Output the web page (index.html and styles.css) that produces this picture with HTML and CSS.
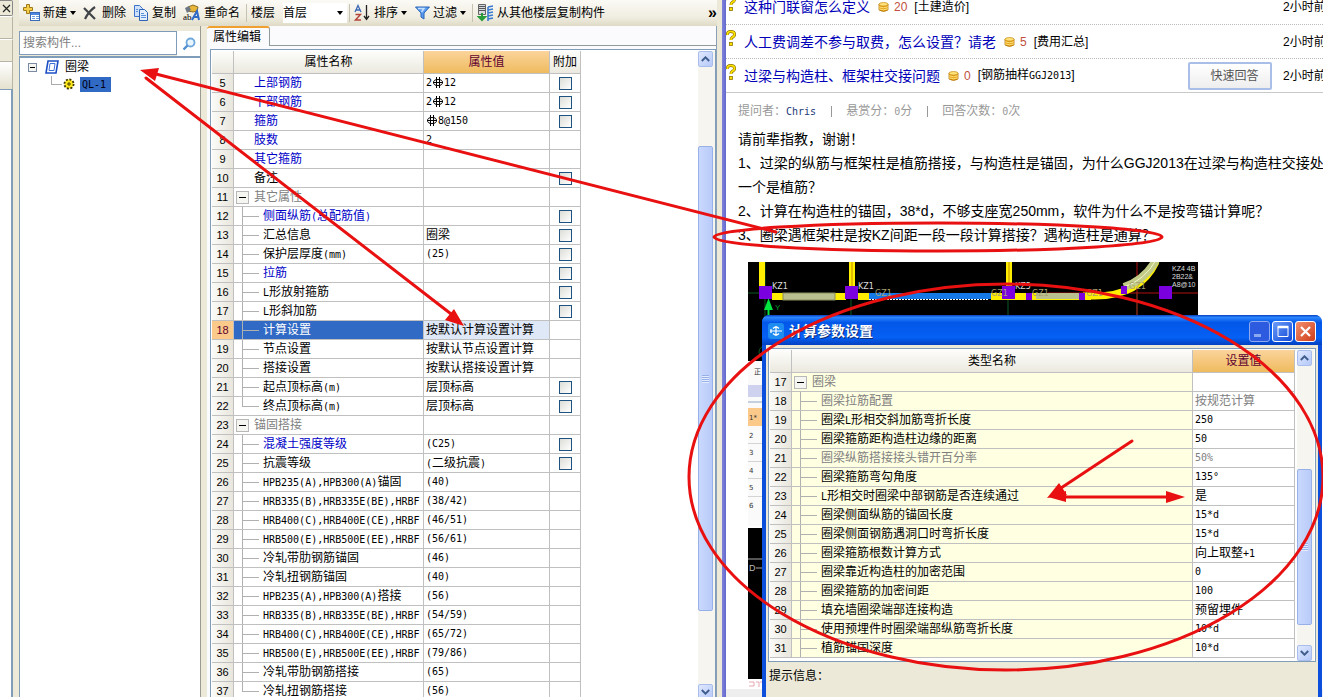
FILE: index.html
```html
<!DOCTYPE html>
<html lang="zh-CN">
<head>
<meta charset="utf-8">
<title>属性编辑</title>
<link rel="stylesheet" href="styles.css">
</head>
<body>
<svg class="defs" width="0" height="0" aria-hidden="true">
  <symbol id="rebar" viewBox="0 0 12 11"><ellipse cx="6" cy="5.500" rx="4.500" ry="3" fill="none" stroke="#000"/><path d="M4.500 0v11M7.500 0v11M1 5.500h10" stroke="#000"/></symbol>
  <symbol id="quest" viewBox="0 0 10 16"><path d="M1.500 5Q1 1.500 4.800 1.500T8.500 4.500Q8.500 6.500 6 7.500 5 8 5 10" fill="none" stroke="#8d7300" stroke-width="3"/><path d="M1.500 5Q1 1.500 4.800 1.500T8.500 4.500Q8.500 6.500 6 7.500 5 8 5 10" fill="none" stroke="#ffe400" stroke-width="1.700"/><rect x="3.500" y="12.500" width="3" height="3" fill="#ffe400" stroke="#8d7300" stroke-width=".8"/></symbol>
  <symbol id="coin" viewBox="0 0 11 10"><path d="M1 2v6q4.500 3 9 0V2z" fill="#e6a21c" stroke="#b3720a" stroke-width=".8"/><ellipse cx="5.500" cy="2.300" rx="4.500" ry="1.800" fill="#ffe27a" stroke="#c98a12" stroke-width=".7"/><path d="M1 4.800q4.500 2 9 0M1 6.800q4.500 2 9 0" fill="none" stroke="#ffe27a"/></symbol>
</svg>
<aside class="dock">
  <button class="dock-close" aria-label="关闭"><svg width="9" height="9" viewBox="0 0 9 9"><path d="M1 1L8 8M8 1L1 8" stroke="#222" stroke-width="1.2"/></svg></button>
  <div class="dock-bar"></div>
  <div class="dock-bar"></div>
  <div class="dock-head"></div>
  <div class="dock-body"></div>
</aside>

<main class="app">
  <div class="toolbar">
    <button class="tool"><svg width="17" height="18" viewBox="0 0 17 18"><path d="M3.500.500h3v3h3v3h-3v3h-3v-3h-3v-3h3z" fill="#f5cf4a" stroke="#a07a18"/><rect x="7.500" y="8.500" width="9" height="8" fill="#fff" stroke="#3a6ab8"/><path d="M8 10h8" stroke="#4c86dc" stroke-width="2"/><path d="M9 12.500h3M13 12.500h3M9 14.500h3M13 14.500h3" stroke="#6d9be0"/></svg>新建<i class="caret"></i></button>
    <button class="tool"><svg class="ico-del" width="14" height="14" viewBox="0 0 14 14"><path d="M1 2L12 13M12 1Q6 5 2 13" fill="none" stroke="#404448" stroke-width="2.200"/></svg>删除</button>
    <button class="tool"><svg width="16" height="16" viewBox="0 0 16 16"><path d="M1.500.500h5l3 3v8h-8z" fill="#cfe2fb" stroke="#3d74c9"/><path d="M6.500 4.500h5l3 3v8h-8z" fill="#e4effe" stroke="#2e62b5"/><path d="M8 8.500h3M8 10.500h5M8 12.500h5M3 4.500h2M3 6.500h2" stroke="#5b8fdc"/></svg>复制</button>
    <button class="tool"><svg width="18" height="18" viewBox="0 0 18 18"><path d="M5 3l5-2 5 2-1 4-4 1-5-1z" fill="#e8b73a" stroke="#8b6a20"/><path d="M2 4l4-2 2 4-4 3z" fill="#6e7884"/><text x="0" y="16" class="ico-ab">ab</text><path d="M9 16l5-9 2 9M11 13h5" fill="none" stroke="#2f6bc6" stroke-width="2"/></svg>重命名</button>
    <span class="sep"></span>
    <label for="floor">楼层</label>
    <span class="floor"><select id="floor"><option>首层</option></select><i class="caret"></i></span>
    <span class="sep"></span>
    <button class="tool tool-sort"><svg width="17" height="18" viewBox="0 0 17 18"><path d="M1 8L4 1.500 7 8M2 6h4" fill="none" stroke="#3c68b8" stroke-width="1.300"/><path d="M1.500 10.500h5l-5 5.500h5.500" fill="none" stroke="#b5433a" stroke-width="1.400"/><path d="M12.500 1v14M10 12l2.500 3.500L15 12" fill="none" stroke="#222" stroke-width="1.300"/></svg>排序<i class="caret"></i></button>
    <button class="tool"><svg width="15" height="14" viewBox="0 0 15 14"><path d="M.500 1h14L9 7v6l-3-2V7z" fill="#5b9df0" stroke="#2963b8"/><path d="M3 2.500h6L6.500 6" fill="none" stroke="#c7e0ff" stroke-width="1.500"/></svg>过滤<i class="caret"></i></button>
    <span class="sep"></span>
    <button class="tool"><svg width="17" height="18" viewBox="0 0 17 18"><path d="M1.500.500h7v10h-7z" fill="#d6d9de" stroke="#666"/><path d="M2 2.500h6M2 4.500h6M2 6.500h6" stroke="#555"/><path d="M5 9v6M2 13l3 3 3-3z" fill="#2b9c3a" stroke="#2b9c3a" stroke-width="2"/><path d="M11 3l5-1M11 6l5-1M11 9l5-1M11 12l5-1M11 15l5-1M11 3v14" stroke="#3a7bd0" stroke-width="1.600"/></svg>从其他楼层复制构件</button>
    <button class="more" aria-label="更多">»</button>
  </div>

  <div class="work">
    <section class="side">
      <div class="search">
        <input type="text" placeholder="搜索构件..." aria-label="搜索构件">
        <button aria-label="搜索"><svg width="14" height="14" viewBox="0 0 14 14"><circle cx="8.500" cy="5.500" r="4" fill="#eaf6ff" stroke="#6fa8dc" stroke-width="1.800"/><path d="M5.500 8.500L1.500 12.500" stroke="#4f8fd0" stroke-width="2.400"/></svg></button>
      </div>
      <div class="tree">
        <div class="node">
          <svg width="9" height="9" viewBox="0 0 9 9"><rect x=".5" y=".5" width="8" height="8" fill="#f4f4f0" stroke="#7b8ba3"/><path d="M2 4.500h5" stroke="#000"/></svg>
          <svg width="14" height="14" viewBox="0 0 14 14"><path d="M3 1h10l-2 12H1z" fill="#fff" stroke="#1d4fc4" stroke-width="1.600"/><path d="M5 3.500h5l-1 7H4z" fill="#fff" stroke="#3e70dd"/></svg>
          <span>圈梁</span>
        </div>
        <div class="node leaf">
          <svg width="12" height="12" viewBox="0 0 12 12"><circle cx="6" cy="6" r="4.500" fill="#ffe81a" stroke="#3d3700" stroke-width="2" stroke-dasharray="2 1.500"/><circle cx="6" cy="6" r="3.500" fill="#ffe81a"/><path d="M4 6h4M6 4v4" stroke="#4a4300"/></svg>
          <span class="m picked">QL-1</span>
        </div>
      </div>
    </section>

    <section class="props">
      <div class="tabs"><button class="tab">属性编辑</button></div>
      <div class="frame frame-main">
        <table class="grid">
          <colgroup><col class="c-no"><col class="c-name"><col class="c-val"><col class="c-add"></colgroup>
          <thead><tr><th></th><th>属性名称</th><th class="hot">属性值</th><th>附加</th></tr></thead>
          <tbody>
          <tr><th>5</th><td class="top blue">上部钢筋</td><td class="m">2<svg class="rebar" width="12" height="11"><use href="#rebar"/></svg>12</td><td><input type="checkbox" aria-label="附加 5"></td></tr>
          <tr><th>6</th><td class="top blue">下部钢筋</td><td class="m">2<svg class="rebar" width="12" height="11"><use href="#rebar"/></svg>12</td><td><input type="checkbox" aria-label="附加 6"></td></tr>
          <tr><th>7</th><td class="top blue">箍筋</td><td class="m"><svg class="rebar" width="12" height="11"><use href="#rebar"/></svg>8@150</td><td><input type="checkbox" aria-label="附加 7"></td></tr>
          <tr><th>8</th><td class="top blue">肢数</td><td class="m">2</td><td></td></tr>
          <tr><th>9</th><td class="top blue">其它箍筋</td><td></td><td></td></tr>
          <tr><th>10</th><td class="top">备注</td><td></td><td><input type="checkbox" aria-label="附加 10"></td></tr>
          <tr><th>11</th><td class="group"><button class="fold" aria-label="折叠"></button>其它属性</td><td></td><td></td></tr>
          <tr><th>12</th><td class="kid blue">侧面纵筋<span class="m">(</span>总配筋值<span class="m">)</span></td><td></td><td><input type="checkbox" aria-label="附加 12"></td></tr>
          <tr><th>13</th><td class="kid">汇总信息</td><td>圈梁</td><td><input type="checkbox" aria-label="附加 13"></td></tr>
          <tr><th>14</th><td class="kid">保护层厚度<span class="m">(mm)</span></td><td class="m">(25)</td><td><input type="checkbox" aria-label="附加 14"></td></tr>
          <tr><th>15</th><td class="kid blue">拉筋</td><td></td><td><input type="checkbox" aria-label="附加 15"></td></tr>
          <tr><th>16</th><td class="kid"><span class="m">L</span>形放射箍筋</td><td></td><td><input type="checkbox" aria-label="附加 16"></td></tr>
          <tr><th>17</th><td class="kid"><span class="m">L</span>形斜加筋</td><td></td><td><input type="checkbox" aria-label="附加 17"></td></tr>
          <tr class="selected"><th>18</th><td class="kid">计算设置</td><td>按默认计算设置计算</td><td></td></tr>
          <tr><th>19</th><td class="kid">节点设置</td><td>按默认节点设置计算</td><td></td></tr>
          <tr><th>20</th><td class="kid">搭接设置</td><td>按默认搭接设置计算</td><td></td></tr>
          <tr><th>21</th><td class="kid">起点顶标高<span class="m">(m)</span></td><td>层顶标高</td><td><input type="checkbox" aria-label="附加 21"></td></tr>
          <tr><th>22</th><td class="kid last">终点顶标高<span class="m">(m)</span></td><td>层顶标高</td><td><input type="checkbox" aria-label="附加 22"></td></tr>
          <tr><th>23</th><td class="group"><button class="fold" aria-label="折叠"></button>锚固搭接</td><td></td><td></td></tr>
          <tr><th>24</th><td class="kid blue">混凝土强度等级</td><td class="m">(C25)</td><td><input type="checkbox" aria-label="附加 24"></td></tr>
          <tr><th>25</th><td class="kid">抗震等级</td><td><span class="m">(</span>二级抗震<span class="m">)</span></td><td><input type="checkbox" aria-label="附加 25"></td></tr>
          <tr><th>26</th><td class="kid"><span class="m">HPB235(A),HPB300(A)</span>锚固</td><td class="m">(40)</td><td></td></tr>
          <tr><th>27</th><td class="kid"><span class="m">HRB335(B),HRB335E(BE),HRBF</span></td><td class="m">(38/42)</td><td></td></tr>
          <tr><th>28</th><td class="kid"><span class="m">HRB400(C),HRB400E(CE),HRBF</span></td><td class="m">(46/51)</td><td></td></tr>
          <tr><th>29</th><td class="kid"><span class="m">HRB500(E),HRB500E(EE),HRBF</span></td><td class="m">(56/61)</td><td></td></tr>
          <tr><th>30</th><td class="kid">冷轧带肋钢筋锚固</td><td class="m">(46)</td><td></td></tr>
          <tr><th>31</th><td class="kid">冷轧扭钢筋锚固</td><td class="m">(40)</td><td></td></tr>
          <tr><th>32</th><td class="kid"><span class="m">HPB235(A),HPB300(A)</span>搭接</td><td class="m">(56)</td><td></td></tr>
          <tr><th>33</th><td class="kid"><span class="m">HRB335(B),HRB335E(BE),HRBF</span></td><td class="m">(54/59)</td><td></td></tr>
          <tr><th>34</th><td class="kid"><span class="m">HRB400(C),HRB400E(CE),HRBF</span></td><td class="m">(65/72)</td><td></td></tr>
          <tr><th>35</th><td class="kid"><span class="m">HRB500(E),HRB500E(EE),HRBF</span></td><td class="m">(79/86)</td><td></td></tr>
          <tr><th>36</th><td class="kid">冷轧带肋钢筋搭接</td><td class="m">(65)</td><td></td></tr>
          <tr><th>37</th><td class="kid last">冷轧扭钢筋搭接</td><td class="m">(56)</td><td></td></tr>
          </tbody>
        </table>
        <div class="scroll scroll-main">
          <button class="sb up" aria-label="向上"><svg width="9" height="6" viewBox="0 0 9 6"><path d="M.800 5L4.500 1.300 8.200 5" fill="none" stroke="#3f5d8c" stroke-width="1.900"/></svg></button>
          <div class="rail"><div class="thumb"></div></div>
          <button class="sb" aria-label="向下"><svg width="9" height="6" viewBox="0 0 9 6"><path d="M.800 1L4.500 4.700 8.200 1" fill="none" stroke="#3f5d8c" stroke-width="1.900"/></svg></button>
        </div>
      </div>
    </section>
  </div>
</main>
<div class="edge"></div>

<section class="web">
  <ul class="asks">
    <li><svg class="quest" width="10" height="16"><use href="#quest"/></svg><a href="#">这种门联窗怎么定义</a><svg width="11" height="10"><use href="#coin"/></svg><b>20</b><span>[土建造价]</span><time>2小时前</time></li>
    <li><svg class="quest" width="10" height="16"><use href="#quest"/></svg><a href="#">人工费调差不参与取费，怎么设置？请老</a><svg width="11" height="10"><use href="#coin"/></svg><b>5</b><span>[费用汇总]</span><time>2小时前</time></li>
    <li><svg class="quest" width="10" height="16"><use href="#quest"/></svg><a href="#">过梁与构造柱、框架柱交接问题</a><svg width="11" height="10"><use href="#coin"/></svg><b>0</b><span>[钢筋抽样<span class="m">GGJ2013</span>]</span><button class="reply">快速回答</button><time class="near">2小时前</time></li>
  </ul>
  <p class="meta"><span>提问者：<a href="#">Chris</a></span><i></i><span>悬赏分：<span class="m">0</span>分</span><i></i><span>回答次数：<span class="m">0</span>次</span></p>
  <div class="post">
    请前辈指教，谢谢！<br>
    1、过梁的纵筋与框架柱是植筋搭接，与构造柱是锚固，为什么GGJ2013在过梁与构造柱交接处<br>
    一个是植筋？<br>
    2、计算在构造柱的锚固，38*d，不够支座宽250mm，软件为什么不是按弯锚计算呢？<br>
    3、圈梁遇框架柱是按KZ间距一段一段计算搭接？遇构造柱是通算？
  </div>
  <svg class="cad" width="450" height="427" viewBox="0 0 450 427">
    <rect width="450" height="99" fill="#000"/>
    <path d="M17 0v99M103 0v99M260 0v99M389 30v69M0 31h12" stroke="#0d5a22"/>
    <path d="M389 0v60M300 31h150" stroke="#b01010"/>
    <path d="M11 0h6v25h-6zM101 0h6v25h-6zM258 0h6v25h-6z" fill="#ffee00"/>
    <path d="M104 0v25M261 0v25" stroke="#c58b00"/>
    <rect x="24" y="31" width="74" height="7" fill="#ffee00"/>
    <rect x="35" y="31" width="52" height="7" fill="#b9bf8f" stroke="#8a8d5c"/>
    <rect x="110" y="31" width="11" height="7" fill="#ffee00"/>
    <rect x="121" y="31" width="122" height="6" fill="#1478e6"/>
    <path d="M121 37.500h120" stroke="#fff" stroke-dasharray="2 1"/>
    <rect x="243" y="31" width="100" height="7" fill="#ffee00"/>
    <rect x="288" y="31" width="43" height="6" fill="#b9bf8f"/>
    <path d="M335 34H347Q392 34 408 0" fill="none" stroke="#ffee00" stroke-width="7"/>
    <path d="M376 25Q397 18 408 -2" fill="none" stroke="#c3cc86" stroke-width="8"/>
    <path d="M376 25Q397 18 408 -2" fill="none" stroke="#f0f4cf"/>
    <path d="M11 24h13v13H11zM97 24h13v13H97zM254 24h13v13h-13zM411 24h13v13h-13zM278 31h6v7h-6zM331 31h6v7h-6zM373 24h6v8h-6z" fill="#7a00e0"/>
    <g class="cad-t"><text x="24" y="27">KZ1</text><text x="110" y="27">KZ1</text><text x="267" y="27">KZ5</text><text x="127" y="34" class="dim">GZ1</text><text x="243" y="34" class="dim">GZ1</text><text x="284" y="34" class="dim">GZ1</text><text x="338" y="34" class="dim">GZ1</text><text x="381" y="27" class="dim">GZ1</text></g>
    <g class="cad-s"><text x="424" y="9">KZ4 4B</text><text x="424" y="17">2B22&amp;</text><text x="424" y="25">A8@10</text></g>
    <path d="M20.500 60V42M17.500 47h6l-3-8z" stroke="#00e640" fill="#00e640" stroke-width="2"/>
    <text x="27" y="48" class="axis">Y</text>
    <circle cx="17" cy="90" r="6" fill="none" stroke="#0d5a22"/>
    <rect y="99" width="18" height="165" fill="#fafafa"/>
    <rect y="123" width="14" height="12" fill="#cfd2ee"/><path d="M0 140h18" stroke="#8fa7c4"/>
    <rect y="146" width="18" height="18" fill="#fbc98a"/>
    <path d="M0 181.500h18M0 199.500h18M0 216.500h18M0 234.500h18" stroke="#d4d4d4"/>
    <g class="cad-n"><text x="6" y="112">正</text><text x="1" y="158">1*</text><text x="1" y="176">2</text><text x="1" y="193">3</text><text x="1" y="211">4</text><text x="1" y="228">5</text><text x="1" y="246">6</text></g>
    <rect y="266" width="18" height="151" fill="#000"/>
    <path d="M0 297h18M8 306h10" stroke="#aaa"/><text x="1" y="309" class="axis-d">D</text>
    <path d="M1 420h5v4H1M8 420h3v5M12 420h3v5" fill="none" stroke="#e5a8b0"/>
  </svg>
  <div class="web-foot"></div>
</section>

<section class="dialog" role="dialog" aria-label="计算参数设置">
  <header>
    <svg width="16" height="16" viewBox="0 0 16 16"><rect width="16" height="16" rx="3" fill="#1d8bf0"/><path d="M2 8h12M8 3v10M5 5.500q3-3 6 0M5 10.500q3 3 6 0M3 6v4" fill="none" stroke="#fff" stroke-width="1.200"/></svg>
    <h2>计算参数设置</h2>
    <button class="win dimmed" aria-label="最小化"><svg width="19" height="19" viewBox="0 0 19 19"><rect x="4" y="12" width="7" height="3" fill="#8aa9f0"/></svg></button>
    <button class="win" aria-label="最大化"><svg width="19" height="19" viewBox="0 0 19 19"><path d="M5 5.500h10v9H5z" fill="none" stroke="#fff"/><path d="M4.500 5h11" stroke="#fff" stroke-width="2.500"/></svg></button>
    <button class="win shut" aria-label="关闭"><svg width="19" height="19" viewBox="0 0 19 19"><path d="M5 5l9 9M14 5l-9 9" stroke="#fff" stroke-width="2.200"/></svg></button>
  </header>
  <div class="dialog-body">
    <div class="frame params">
      <table class="grid pale">
        <colgroup><col class="d-no"><col><col class="d-val"></colgroup>
        <thead><tr><th></th><th>类型名称</th><th class="hot">设置值</th></tr></thead>
        <tbody>
        <tr><th>17</th><td class="group"><button class="fold" aria-label="折叠"></button>圈梁</td><td></td></tr>
        <tr class="off"><th>18</th><td class="kid">圈梁拉筋配置</td><td>按规范计算</td></tr>
        <tr><th>19</th><td class="kid">圈梁<span class="m">L</span>形相交斜加筋弯折长度</td><td class="m">250</td></tr>
        <tr><th>20</th><td class="kid">圈梁箍筋距构造柱边缘的距离</td><td class="m">50</td></tr>
        <tr class="off"><th>21</th><td class="kid">圈梁纵筋搭接接头错开百分率</td><td class="m">50%</td></tr>
        <tr><th>22</th><td class="kid">圈梁箍筋弯勾角度</td><td class="m">135°</td></tr>
        <tr><th>23</th><td class="kid"><span class="m">L</span>形相交时圈梁中部钢筋是否连续通过</td><td>是</td></tr>
        <tr><th>24</th><td class="kid">圈梁侧面纵筋的锚固长度</td><td class="m">15*d</td></tr>
        <tr><th>25</th><td class="kid">圈梁侧面钢筋遇洞口时弯折长度</td><td class="m">15*d</td></tr>
        <tr><th>26</th><td class="kid">圈梁箍筋根数计算方式</td><td>向上取整<span class="m">+1</span></td></tr>
        <tr><th>27</th><td class="kid">圈梁靠近构造柱的加密范围</td><td class="m">0</td></tr>
        <tr><th>28</th><td class="kid">圈梁箍筋的加密间距</td><td class="m">100</td></tr>
        <tr><th>29</th><td class="kid">填充墙圈梁端部连接构造</td><td>预留埋件</td></tr>
        <tr><th>30</th><td class="kid">使用预埋件时圈梁端部纵筋弯折长度</td><td class="m">10*d</td></tr>
        <tr><th>31</th><td class="kid">植筋锚固深度</td><td class="m">10*d</td></tr>
        </tbody>
      </table>
      <div class="scroll scroll-dialog">
        <button class="sb up" aria-label="向上"><svg width="9" height="6" viewBox="0 0 9 6"><path d="M.800 5L4.500 1.300 8.200 5" fill="none" stroke="#3f5d8c" stroke-width="1.900"/></svg></button>
        <div class="rail"><div class="thumb"></div></div>
        <button class="sb" aria-label="向下"><svg width="9" height="6" viewBox="0 0 9 6"><path d="M.800 1L4.500 4.700 8.200 1" fill="none" stroke="#3f5d8c" stroke-width="1.900"/></svg></button>
      </div>
    </div>
    <p class="hint">提示信息：</p>
  </div>
</section>

<svg class="marks" width="1323" height="697" viewBox="0 0 1323 697" aria-hidden="true">
  <g fill="none" stroke="#e81010" stroke-width="3">
    <path d="M776 232L152 73M146 78L455 317M1132 441L1058 490M1060 497H1172" stroke-linecap="round"/>
    <ellipse cx="938" cy="237" rx="224" ry="14"/>
    <ellipse cx="1006" cy="477" rx="317" ry="193"/>
  </g>
  <path d="M140 70L159 68 155 81zM464 326L445 320 454 309zM1047 498L1059 483 1067 495zM1048 497L1066 491V502zM1185 497L1166 491V503z" fill="#e81010"/>
</svg>
</body>
</html>
```
FILE: styles.css
```css
* { box-sizing: border-box; }

body {
  margin: 0;
  height: 100vh;
  overflow: hidden;
  display: flex;
  background: #ece9d8;
  color: #000;
  font: 12px/18px "Liberation Sans", "Noto Sans CJK SC", sans-serif;
}

button, input, select { font: inherit; color: inherit; }
button { padding: 0; border: 0; background: none; }
h2, p, ul { margin: 0; padding: 0; }
svg { flex: none; display: block; }

.m { font-family: "DejaVu Sans Mono", "Noto Sans CJK SC", monospace; font-size: 10px; }

/* left dock */
.dock { flex: 0 0 13px; display: flex; flex-direction: column; margin-right: 6px; }
.dock-close { height: 16px; border: 1px solid #888; border-left: 0; border-radius: 0 2px 2px 0; display: grid; place-items: center; }
.dock-bar { height: 23px; border: 1px solid #b8b5a4; border-left: 0; border-top-color: #fff; }
.dock-head { height: 27px; background: linear-gradient(#fff, #e4e1cf); border-right: 1px solid #b8b5a4; }
.dock-body { flex: 1; background: #fff; border-top: 1px solid #7f9db9; border-right: 2px solid #7f9db9; }

/* application */
.app { flex: 0 0 698px; display: flex; flex-direction: column; min-width: 0; }
.toolbar { height: 26px; display: flex; align-items: center; padding-left: 4px; background: linear-gradient(#fbfaf5, #efecdf 70%, #dedac6); white-space: nowrap; }
.tool { display: flex; align-items: center; gap: 3px; margin-right: 7px; }
.tool-sort { margin-right: 8px; }
.ico-del { margin-right: 2px; }
.ico-ab { font: 9px "Liberation Serif", serif; }
.caret { border: 3px solid transparent; border-top: 4px solid #000; border-bottom: 0; }
.sep { width: 1px; height: 18px; background: #c5c2b2; margin-right: 4px; }
.tool + .sep { margin-left: -1px; }
.floor { display: flex; align-items: center; width: 64px; height: 20px; margin: 0 2px 0 8px; background: #fff; padding-right: 4px; }
.floor select { flex: 1; appearance: none; border: 0; background: none; padding: 0; height: 20px; }
.more { margin-left: auto; font-size: 16px; font-weight: bold; line-height: 12px; }

.work { flex: 1; display: flex; min-height: 0; }
.side { flex: 0 0 182px; display: flex; flex-direction: column; margin-right: 6px; border-right: 1px solid #9a9a90; }
.search { display: flex; height: 30px; padding-top: 5px; }
.search input { width: 158px; height: 24px; border: 1px solid #7f9db9; background: #fff; padding: 0 3px; font-size: 12px; }
.search input::placeholder { color: #808080; }
.search button { flex: 1; display: grid; place-items: center; background: #fff; }
.tree { flex: 1; background: #fff; border: 1px solid #7f9db9; border-width: 2px 0 0 1px; padding-left: 8px; }
.node { display: flex; align-items: center; height: 16px; margin-top: 1px; gap: 6px; }
.node svg + svg { margin-left: 2px; }
.leaf { margin-left: 23px; padding-left: 12px; gap: 5px; background: linear-gradient(#aaa, #aaa) 0 8px / 11px 1px no-repeat, linear-gradient(#aaa, #aaa) 0 0 / 1px 8px no-repeat; }
.picked { background: #316ac5; color: #001; width: 31px; height: 15px; line-height: 15px; padding-left: 2px; }

.props { flex: 1; min-width: 0; display: flex; flex-direction: column; background: #fbfbfe; border-right: 1px solid #8aa0b8; }
.tabs { height: 20px; border-bottom: 1px solid #919b9c; margin-bottom: 3px; }
.tab { height: 20px; padding: 0 8px 0 6px; background: #fbfbfe; border: 1px solid #919b9c; border-width: 0 1px 0 0; border-top: 2px solid #f0a030; border-radius: 3px 3px 0 0; font-size: 12px; line-height: 18px; }
.frame { flex: 1; min-height: 0; display: flex; overflow: hidden; background: #fff; border: 1px solid #7f9db9; padding: 1px 1px 0 1px; }
.frame-main { margin: 0 0 -4px 3px; padding-right: 0; }

/* grids */
.grid { table-layout: fixed; width: 369px; align-self: flex-start; border-spacing: 0; background: #fff; }
.c-no { width: 22px; } .c-name { width: 190px; } .c-val { width: 126px; } .c-add { width: 31px; }
.d-no { width: 22px; } .d-val { width: 102px; }
.grid th { font-weight: normal; padding: 0; background: linear-gradient(90deg, #fafaf8, #e8e6dc); border: 1px solid #c0c0c0; border-width: 0 1px 1px 0; }
.grid thead th { height: 23px; background: linear-gradient(#fdfdfb, #ebe9df); }
.grid thead .hot { background: linear-gradient(#fbd49c, #efbb5e); color: #600030; }
.grid tbody th { font: 11px/18px "Liberation Sans", sans-serif; }
.grid td { height: 19px; padding: 0 0 0 2px; line-height: 18px; white-space: nowrap; overflow: hidden; border: 1px solid #c0c0c0; border-width: 0 1px 1px 0; }
.grid td .m { line-height: 16px; }
.grid td.top { padding-left: 20px; }
.grid td.kid { padding-left: 29px; background-image: linear-gradient(#b0b0b0, #b0b0b0), linear-gradient(#b0b0b0, #b0b0b0); background-position: 8px 9px, 8px 0; background-size: 17px 1px, 1px 100%; background-repeat: no-repeat; }
.grid td.last { background-size: 17px 1px, 1px 9px; }
.grid .blue { color: #0000c8; }
.grid .group, .grid .off td { color: #808080; }
.fold { width: 13px; height: 13px; margin: 0 5px 0 0; vertical-align: -2px; border: 1px solid #b8b8b8; background: linear-gradient(#000, #000) center / 7px 1px no-repeat #f5f5f2; }
.selected td.kid { background-color: #316ac5; color: #fff; }
.selected td:nth-child(3) { background: #dfe8f6; }
.grid tbody .selected th { background: #fbc98a; color: #600030; }
.grid input { appearance: none; display: block; width: 13px; height: 13px; margin: 0 auto; border: 1px solid #1d5281; background: linear-gradient(135deg, #dcdcd7, #fff); }
.grid td:nth-child(4) { padding: 0; }
.rebar { display: inline-block; vertical-align: -2px; }
.pale { flex: 1; width: auto; }
.pale td.group, .pale td.kid { background-color: #ffffe1; }

/* scroll bars */
.scroll { flex: 0 0 17px; display: flex; flex-direction: column; margin-left: auto; background: #f6f5ef; padding-right: 2px; }
.sb { width: 15px; height: 16px; display: grid; place-items: center; background: linear-gradient(135deg, #dfe8fe, #b5c8f8); border: 1px solid #a9bdec; border-radius: 2px; }
.rail { flex: 1; display: flex; flex-direction: column; }
.thumb { flex: 1; background: repeating-linear-gradient(#98b0e8 0 1px, #e4ecff 1px 2px) center / 7px 8px no-repeat, linear-gradient(90deg, #c9d8fd, #b9cbf9); border: 1px solid #98b0e8; border-radius: 2px; }
.scroll-main .rail { padding: 79px 0 73px; }
.scroll-dialog .rail { padding: 103px 0 20px; }

.edge { flex: 0 0 9px; background: linear-gradient(90deg, #ece9d8 5px, #8084dc 5px, #6468cc); }

/* question page */
.web { flex: 1; min-width: 0; overflow: hidden; display: flex; flex-direction: column; background: #fff; }
.defs { position: absolute; }
.asks { list-style: none; font-size: 12px; }
.asks li { display: flex; align-items: center; height: 34px; border-bottom: 1px dotted #bbb; white-space: nowrap; }
.asks li:first-child { height: 25px; padding-bottom: 10px; }
.asks li:last-child { border-bottom: 1px solid #c8c8c8; }
.asks a { color: #0000b8; text-decoration: none; font-size: 14px; margin: 0 8px; }
.asks b { font-weight: normal; color: #c0503c; margin: 0 7px 0 5px; }
.asks .quest { margin-bottom: 8px; }
.asks time { flex: 0 0 40px; margin-left: auto; overflow: hidden; }
.asks .near { margin-left: 11px; }
.reply { width: 84px; height: 28px; margin-left: auto; padding-left: 9px; border: 2px solid #a9bfe8; border-radius: 2px; color: #555; background: linear-gradient(#fff, #eee); }
.meta { display: flex; align-items: center; color: #999; padding: 2px 0 0 12px; height: 34px; font-family: "Liberation Sans", "Noto Sans CJK TC", sans-serif; }
.meta a { color: #1c3a78; text-decoration: none; font: 10px "DejaVu Sans Mono", monospace; }
.meta i { width: 1px; height: 11px; background: #999; margin: 0 14px 0 15px; }
.post { font-size: 14px; line-height: 24px; padding: 0 0 0 12px; white-space: nowrap; }
.cad { margin: 15px 0 0 22px; }
.cad-t { font: 8px "DejaVu Sans", sans-serif; fill: #ddd; }
.cad-t .dim { fill: #a8a070; }
.cad-s { font: 7px "Liberation Sans", sans-serif; fill: #ddd; }
.cad-n { font: 7px "DejaVu Sans", "Noto Sans CJK SC", sans-serif; fill: #333; }
.axis { font: 8px "Liberation Sans", sans-serif; fill: #00a030; }
.axis-d { font: 9px "Liberation Sans", sans-serif; fill: #bbb; }
.web-foot { flex: 1; background: #eee; }

/* settings window over the page */
.dialog { position: absolute; left: 762px; right: 1px; top: 315px; bottom: 0; display: flex; flex-direction: column; background: #0b4fdc; border-radius: 7px 7px 0 0; padding: 0 4px; }
.dialog header { height: 30px; display: flex; align-items: center; gap: 2px; margin: 0 -4px; padding: 2px 6px 0 6px; border-radius: 7px 7px 0 0; background: linear-gradient(#0a3fc0, #2b87ff 8%, #0357e8 25%, #0560f4 75%, #0240c0); }
.dialog h2 { flex: 1; margin-left: 3px; color: #fff; font-size: 14px; text-shadow: 1px 1px #0a2a78; }
.win { width: 21px; height: 21px; display: grid; place-items: center; background: linear-gradient(135deg, #6c9cf8, #1048d8); border: 1px solid #fff; border-radius: 3px; }
.dimmed { border-color: #8fa8ee; background: #2c5be0; }
.shut { background: linear-gradient(135deg, #f09070, #d03c18); }
.dialog-body { flex: 1; background: #ece9d8; padding: 3px 2px 0; display: flex; flex-direction: column; }
.params { flex: 0 0 314px; }
.params .scroll { margin-left: 2px; }
.hint { padding: 4px 0 0 1px; font-family: "Noto Sans CJK TC", sans-serif; }

/* red annotation marks over everything */
.marks { position: absolute; left: 0; top: 0; pointer-events: none; }
```
